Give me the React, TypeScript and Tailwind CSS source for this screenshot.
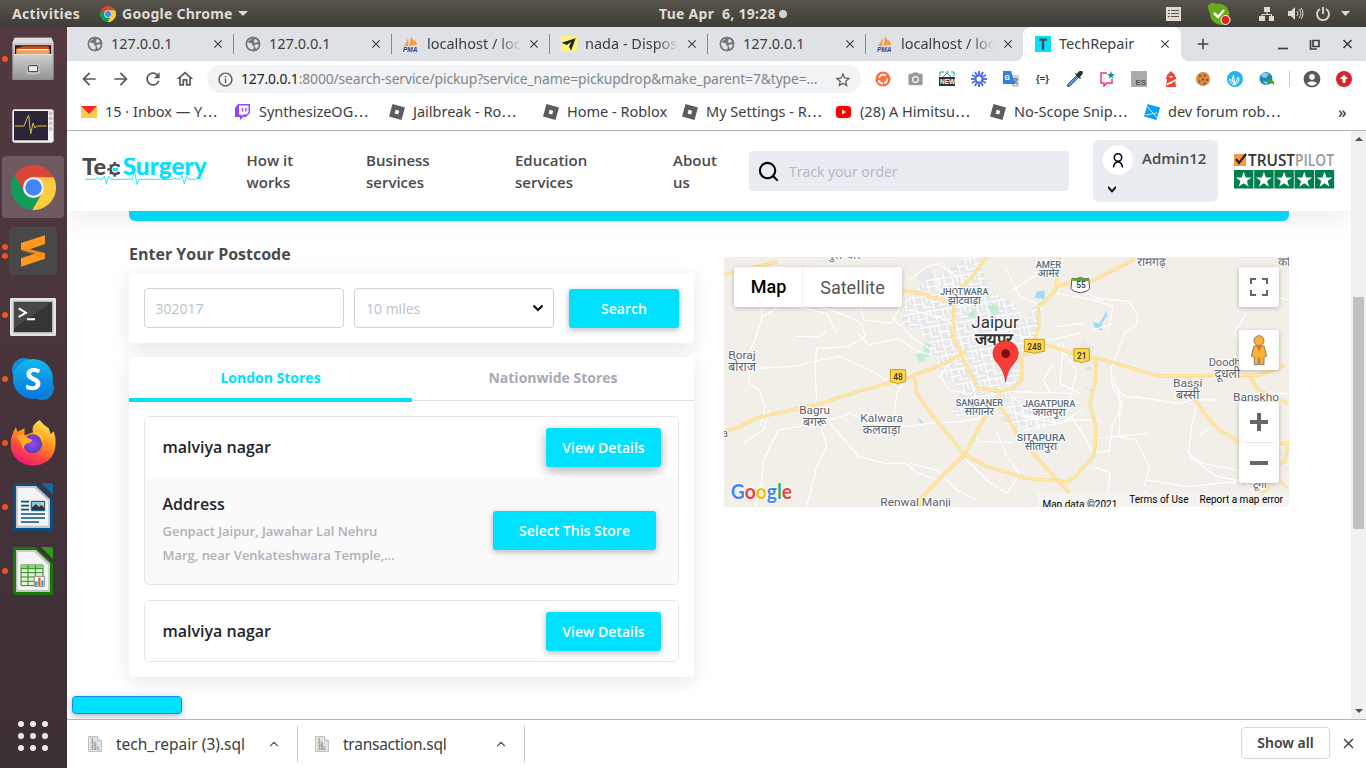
import React from "react";
import {
  MdArrowBack,
  MdArrowForward,
  MdRefresh,
  MdOutlineHome,
  MdInfoOutline,
  MdStarBorder,
  MdAccountCircle,
  MdCameraAlt,
  MdClose,
  MdAdd,
} from "react-icons/md";
import { Search, ChevronDown, ChevronUp } from "lucide-react";

type Kids = { children?: React.ReactNode };

function ChromeLogo({ size }: { size: number }) {
  const wedge = "M-18.45,-12 A22 22 0 0 1 19.6,-10 L0,-10 A10 10 0 0 0 -8.66,5 Z";
  return (
    <svg width={size} height={size} viewBox="-22 -22 44 44" className="shrink-0">
      <path d={wedge} fill="#db4437" />
      <path d={wedge} fill="#0f9d58" transform="rotate(-120)" />
      <path d={wedge} fill="#ffcd40" transform="rotate(120)" />
      <circle r="10.3" fill="#f1f1f1" />
      <circle r="8.1" fill="#4285f4" />
    </svg>
  );
}

/* ---------- System bar ---------- */

function SystemBar() {
  return (
    <div className="flex h-[27px] shrink-0 items-center bg-linear-to-b from-[#57544c] to-[#3f3d38] font-['Noto_Sans','Open_Sans',sans-serif] text-[14px] font-bold text-[#dfdbd2]">
      <div className="w-[100px] pl-3 tracking-[0.3px]">Activities</div>
      <ChromeLogo size={16} />
      <div className="ml-[6px] w-[116px] whitespace-nowrap tracking-[0.25px]">Google Chrome</div>
      <svg width="10" height="5" viewBox="0 0 10 5">
        <path d="M0 0h10L5 5z" fill="#dfdbd2" />
      </svg>
      <div className="ml-[411px] w-[118px] whitespace-pre text-[14px] tracking-[0.27px]">Tue Apr  6, 19:28</div>
      <div className="ml-[2px] size-2 rounded-full bg-[#d5d2ca]" />
      <svg width="15" height="14" viewBox="0 0 15 14" className="ml-[379px]">
        <path d="M0 0h15v14H0z" fill="#dfdbd2" />
        <path d="M2 3.5h2M5 3.5h8M2 6.5h2M5 6.5h8M2 9.5h2M5 9.5h8" stroke="#57544c" />
      </svg>
      <svg width="24" height="24" viewBox="0 0 24 24" className="ml-[26px]">
        <path d="M1 5C1 1 6 0 9 2c6-1 12 2 13 8 1 7-1 12-7 13-6 0-12-4-12-12C2 9 1 7 1 5z" fill="#67ab1c" />
        <path d="M7 11l4 4 6-7" stroke="#fff" strokeWidth="2.5" fill="none" />
        <circle cx="18.500" cy="18" r="4.500" fill="#e02020" stroke="#fff" />
      </svg>
      <svg width="92" height="16" viewBox="0 0 92 16" className="ml-[28px]">
        <g fill="#dfdbd2">
          <path d="M5 1h6v5H5zM0 10h6v5H0zM10 10h5v5h-5z" />
          <path d="M8 6v2.500M3 10V8.500h9.500V10" stroke="#dfdbd2" fill="none" />
          <path d="M29 5h3l4-4v13l-4-4h-3z" />
          <path d="M38 5q2 2.500 0 5M40 3q4 4.500 0 9M42 2q4 5.500 0 11" stroke="#dfdbd2" fill="none" />
          <path d="M61 3a6 6 0 1 0 6 0M64 1v7" stroke="#dfdbd2" strokeWidth="1.800" fill="none" />
          <path d="M82 5h9l-4.500 5z" />
        </g>
      </svg>
    </div>
  );
}

/* ---------- Dock ---------- */

function DockItem({ dots = 1, active = false, children }: Kids & { dots?: number; active?: boolean }) {
  return (
    <div className="flex h-16 items-center">
      <div className="flex w-[2px] shrink-0 flex-col items-start gap-[3px] pl-[2px]">
        {Array.from({ length: dots }).map((_, i) => (
          <div key={i} className="size-[6px] shrink-0 rounded-full bg-[#ea5420]" />
        ))}
      </div>
      <div className={active ? "flex h-[62px] w-[62px] items-center justify-center rounded-[4px] bg-[#705a61]" : "flex h-[62px] w-[62px] items-center justify-center"}>
        {children}
      </div>
    </div>
  );
}

function OfficeDoc({ dark, light, children }: Kids & { dark: string; light: string }) {
  return (
    <svg width="40" height="48" viewBox="0 0 120 144">
      <path d="M0 6q0-6 6-6h60l54 50v88q0 6-6 6H6q-6 0-6-6z" fill={dark} />
      <path d="M84 0h30q6 0 6 6v30z" fill={light} />
      <path d="M9 9h60l42 40v86H9z" fill="#c4c4c4" />
      <path d="M14 14h50l42 40v74H14z" fill="#f4f4f4" />
      {children}
    </svg>
  );
}

function Dock() {
  return (
    <div className="flex w-[67px] shrink-0 flex-col bg-linear-to-b from-[#533a40] via-[#47333a] to-[#3b3036]">
      <DockItem>
        <svg width="42" height="44" viewBox="0 0 126 132">
          <defs>
            <linearGradient id="cab" x1="0" y1="0" x2="0" y2="1">
              <stop offset="0" stopColor="#cfcfcf" />
              <stop offset="1" stopColor="#949494" />
            </linearGradient>
          </defs>
          <path d="M8 2h110l7 16v110H1V18z" fill="url(#cab)" />
          <path d="M8 2h110l7 16H1z" fill="#dcdcdc" />
          <path d="M9 25h108v27H9z" fill="#221a18" />
          <path d="M13 32q15 0 18-4h80v24H13z" fill="#cf4a18" />
          <path d="M13 36h100v16H13z" fill="#f3a15a" />
          <path d="M18 38h90" stroke="#fff" strokeWidth="3" />
          <path d="M5 52h116v76H5z" fill="url(#cab)" />
          <path d="M5 53h116" stroke="#e8e8e8" strokeWidth="3" />
          <rect x="42" y="78" width="42" height="34" rx="7" fill="#c6c6c6" stroke="#aaa" strokeWidth="2" />
          <rect x="49" y="86" width="28" height="18" rx="2" fill="#eee" stroke="#333" strokeWidth="3" />
        </svg>
      </DockItem>
      <DockItem dots={0}>
        <svg width="42" height="34" viewBox="0 0 126 102" className="mt-1.5">
          <rect x="1" y="1" width="124" height="100" rx="7" fill="#f4f2f0" />
          <rect x="6" y="6" width="102" height="88" fill="#2c2538" />
          <path d="M8 51h28l8-20 6-12 6 56 7-33 6 15 5-6h30" fill="none" stroke="#d6c03c" strokeWidth="3" />
          <g fill="#cfcac6" stroke="#918b88">
            <circle cx="116" cy="13" r="5" /><circle cx="116" cy="28" r="5" /><circle cx="116" cy="43" r="5" /><circle cx="116" cy="60" r="5" />
          </g>
        </svg>
      </DockItem>
      <DockItem active><ChromeLogo size={45} /></DockItem>
      <DockItem dots={2}>
        <div className="flex size-12 items-center justify-center rounded-[4px] bg-[#484848]">
          <svg width="26" height="32" viewBox="0 0 78 96">
            <path d="M3 24L75 1v26L29 43l46 12v16L3 95V70l45-15L3 44z" fill="#ff9820" />
            <path d="M3 42l26 1 46 12v16L3 46z" fill="#f08418" opacity=".5" />
          </svg>
        </div>
      </DockItem>
      <DockItem>
        <svg width="46" height="38" viewBox="0 0 138 114" className="mt-1">
          <rect width="138" height="114" rx="4" fill="#e6e4e2" />
          <rect x="8" y="8" width="122" height="98" fill="#b9b6b3" />
          <rect x="12" y="12" width="114" height="90" fill="#353535" />
          <path d="M12 12h114L12 90z" fill="#484848" />
          <path d="M26 31l22 13-22 13M51 64h24" fill="none" stroke="#fff" strokeWidth="6" />
        </svg>
      </DockItem>
      <DockItem>
        <svg width="42" height="42" viewBox="0 0 42 42">
          <defs>
            <linearGradient id="sky" x1="0" y1="0" x2="0" y2="1">
              <stop offset="0" stopColor="#0db9f2" />
              <stop offset="1" stopColor="#0b74d8" />
            </linearGradient>
          </defs>
          <circle cx="12" cy="12" r="12" fill="#0a91d9" />
          <circle cx="30" cy="30" r="12" fill="#0b83d6" />
          <circle cx="21" cy="21" r="20" fill="url(#sky)" />
          <text x="21" y="32" textAnchor="middle" fontFamily="Open Sans" fontWeight="700" fontSize="30" fill="#fff">S</text>
        </svg>
      </DockItem>
      <DockItem>
        <svg width="46" height="46" viewBox="0 0 138 140">
          <defs>
            <linearGradient id="fx" x1="0.8" y1="0" x2="0.3" y2="1">
              <stop offset="0" stopColor="#fff14a" />
              <stop offset=".4" stopColor="#ff9a1f" />
              <stop offset=".7" stopColor="#ff4a3d" />
              <stop offset="1" stopColor="#e8137c" />
            </linearGradient>
            <radialGradient id="fxp">
              <stop offset="0" stopColor="#a147f0" />
              <stop offset="1" stopColor="#5a3fc0" />
            </radialGradient>
          </defs>
          <path d="M89 0q12 16 28 25l6 18 9-9q8 22 5 44a68 62 0 0 1-136-2Q1 46 17 22l5 14 21-11v22l26-10q-7-20 20-37z" fill="url(#fx)" />
          <circle cx="68" cy="72" r="29" fill="url(#fxp)" />
          <path d="M18 48q22-8 31 2 4 7 18 10-3 10-16 11-9 4-11 19Q31 65 18 48z" fill="#ffab25" />
          <path d="M68 38q24 4 28 32 8-18-9-34z" fill="#ffc42c" />
        </svg>
      </DockItem>
      <DockItem>
        <OfficeDoc dark="#0a4f80" light="#0d68a3">
          <path d="M24 56h24M24 68h24M24 80h24M24 93h72M24 105h72M24 117h54" stroke="#0a4f80" strokeWidth="5" />
          <path d="M55 55h40v28H55z" fill="#8bc6ea" stroke="#0a4f80" strokeWidth="3" />
          <path d="M57 81V73l12-10 9 9 7-6 9 9v6z" fill="#333" />
          <circle cx="88" cy="62" r="4" fill="#f7d84d" />
        </OfficeDoc>
      </DockItem>
      <DockItem>
        <OfficeDoc dark="#177a08" light="#28a012">
          <path d="M24 54h66v62H24z" fill="#e0f2da" stroke="#2d8a1e" strokeWidth="3" />
          <path d="M24 54h66v10H24z" fill="#8fd07e" />
          <path d="M24 65h66M24 77h66M24 90h66M24 103h66M45 54v62M67 54v62" stroke="#2d8a1e" strokeWidth="3" />
          <path d="M64 88h30v30H64z" fill="#fff" stroke="#888" strokeWidth="3" />
          <path d="M70 116v-13" stroke="#3a8fd8" strokeWidth="7" />
          <path d="M79 116V92" stroke="#e0621c" strokeWidth="7" />
          <path d="M88 116v-16" stroke="#3a8fd8" strokeWidth="6" />
        </OfficeDoc>
      </DockItem>
      <div className="mt-auto mb-[17px] ml-[18px] grid w-[30px] grid-cols-3 gap-[6px]">
        {Array.from({ length: 9 }).map((_, i) => (
          <div key={i} className="size-[6px] rounded-full bg-[#ece9e6]" />
        ))}
      </div>
    </div>
  );
}

/* ---------- Browser chrome ---------- */

function PmaIcon() {
  return (
    <svg width="16" height="16" viewBox="0 0 16 16" className="shrink-0">
      <path d="M1 10Q4 6 5 2q1 4 0 8zM6 10Q8 5 8 0q3 5 3 9zM11 9q0-3-1-6 4 3 4 6z" fill="#f79a3a" />
      <text x="0" y="15.500" fontFamily="Liberation Sans" fontWeight="700" fontStyle="italic" fontSize="6.500" fill="#38407a">PMA</text>
    </svg>
  );
}
function NadaIcon() {
  return (
    <svg width="16" height="16" viewBox="0 0 48 48" className="shrink-0">
      <path d="M0 0h48v48H0z" fill="#fff47a" />
      <path d="M2 20L44 7 30 44 24 31l8-14-15 10z" fill="#222" />
    </svg>
  );
}
const Globe = () => (
  <svg width="16" height="16" viewBox="0 0 48 48" className="shrink-0">
    <circle cx="24" cy="24" r="22" fill="#757575" />
    <path d="M22 6q-3 5-7 5-1 4-6 5 0 6 6 5 5 0 7 4-1 6 4 6 3 6-4 11Q8 41 6 24 7 10 22 6z" fill="#dee1e6" />
    <path d="M28 8q8 2 11 8-5 6-9 4-6-3-3-6 4-2 1-6zM30 27q6-4 12 0-2 9-9 13-1-7-4-8-2-3 1-5z" fill="#dee1e6" />
    <circle cx="24" cy="24" r="20" fill="none" stroke="#757575" strokeWidth="4" />
  </svg>
);

function Tab({ icon, label, last }: { icon: React.ReactNode; label: string; last?: boolean }) {
  return (
    <div className="flex w-[158px] items-center">
      <div className="flex w-6 shrink-0">{icon}</div>
      <div className={label.length > 10 ? "w-[94px] overflow-hidden whitespace-nowrap mask-r-from-75%" : "w-[94px] whitespace-nowrap"}>{label}</div>
      <MdClose size={14} className="ml-[6px] text-[#3c4043]" />
      <div className={last ? "hidden" : "ml-[8px] h-5 w-px bg-[#878b91]"} />
    </div>
  );
}

function TabStrip() {
  return (
    <div className="flex h-[34px] shrink-0 bg-[#dee1e6] pl-5 text-[14.5px] text-[#3c4043]">
      <Tab icon={<Globe />} label="127.0.0.1" />
      <Tab icon={<Globe />} label="127.0.0.1" />
      <Tab icon={<PmaIcon />} label="localhost / loc" />
      <Tab icon={<NadaIcon />} label="nada - Disposa" />
      <Tab icon={<Globe />} label="127.0.0.1" />
      <Tab icon={<PmaIcon />} label="localhost / loc" last />
      <div className="relative -ml-[12px] flex w-[158px] items-center rounded-t-lg bg-white pl-3">
        <div className="absolute bottom-0 -left-2 size-2 bg-[radial-gradient(circle_at_0_0,#dee1e6_8px,white_8px)]" />
        <div className="absolute -right-2 bottom-0 size-2 bg-[radial-gradient(circle_at_100%_0,#dee1e6_8px,white_8px)]" />
        <svg width="16" height="16" viewBox="0 0 16 16">
          <path d="M0 0h16v16H0z" fill="#00e0ff" />
          <path d="M4 2.500h8v2.200H9.200V14H6.800V4.700H4z" fill="#4a4a4a" />
        </svg>
        <div className="ml-2 w-[99px]">TechRepair</div>
        <MdClose size={14} />
      </div>
      <div className="flex flex-1 items-center pl-[13px]">
        <MdAdd size={18} />
        <svg width="76" height="14" viewBox="0 0 76 14" className="ml-[65px]" fill="none" stroke="#3c4043" strokeWidth="1.700">
          <path d="M1 11.500h10" />
          <path d="M36 3.500h6v6h-6zM33.500 3v9H40" />
          <path d="M66.500 3l8 8M74.500 3l-8 8" />
        </svg>
      </div>
    </div>
  );
}

const extensionIcons: React.ReactNode[] = [
  <>
    <circle cx="8" cy="8" r="7.500" fill="#ff6c37" />
    <path d="M4 7a4.200 4.200 0 0 1 6-3M12 7.500a4.200 4.200 0 0 1-2 4.500M8 12.500a4.200 4.200 0 0 1-4-3" fill="none" stroke="#fff" strokeWidth="1.800" />
    <path d="M9 2.500l2.500 1.500-2 2zM11.500 12.500h-3l1.500-2.500zM3 12V9l2.500 1z" fill="#fff" />
  </>,
  null,
  <>
    <path d="M1 5V1h4M7 1h3M12 1h3v4" stroke="#1a9caa" fill="none" />
    <path d="M4 6l4-4 4 4" stroke="#1a9caa" fill="none" />
    <path d="M0 6h16v9H0z" fill="#333" />
    <text x="1" y="13" fontFamily="Liberation Sans" fontWeight="700" fontSize="6.500" fill="#fff">NEW</text>
  </>,
  <g stroke="#4f6bed" strokeWidth="1.900">
    {[0, 30, 60, 90, 120, 150, 180, 210, 240, 270, 300, 330].map((a) => (
      <path key={a} d="M8 0v5" transform={`rotate(${a} 8 8)`} />
    ))}
    <circle cx="8" cy="8" r="3.500" fill="none" />
  </g>,
  <>
    <path d="M6 4h10v12H9z" fill="#cfd3d8" />
    <path d="M0 0h8l4 13H0z" fill="#2f7de9" />
    <text x="1.500" y="9" fontFamily="Roboto" fontWeight="700" fontSize="8" fill="#fff">G</text>
    <path d="M10 8h5M12.500 7v1M14 8q-1 4-4 5M11 9q1 3 4 4" stroke="#49708a" fill="none" />
  </>,
  <text x="1" y="11" fontFamily="Liberation Sans" fontWeight="700" fontSize="9.500" fill="#333">{"{=}"}</text>,
  <>
    <path d="M9.500 4.500l2 2L3 15l-3 1 1-3z" fill="#5d8fd0" stroke="#3d4450" strokeWidth=".8" />
    <path d="M8 3l5 5 1-1-1-1 2.500-3q1-2-.5-3t-3 .5L9.500 3 9 2z" fill="#2c2f36" />
  </>,
  <>
    <path d="M8 2H2v10h3v3l3-3h5V8" fill="none" stroke="#ef3e66" strokeWidth="1.500" />
    <path d="M12 0l1 3h3l-2.500 2 1 3L12 6 9.500 8l1-3L8 3h3z" fill="#16919b" />
  </>,
  <>
    <path d="M0 0h16v16H0z" fill="#aaa" />
    <text x="4.500" y="14" fontFamily="Liberation Sans" fontWeight="700" fontSize="8" fill="#555">ES</text>
  </>,
  <>
    <path d="M4 4l4-4 4 4v2h1v2h-1l1 8H3l1-8H3V6h1z" fill="#f4452c" />
    <path d="M6.500 6.500V5h3v1.500zM4 12.500l8-4v2l-8 4z" fill="#fff" />
  </>,
  <>
    <circle cx="8" cy="8" r="7" fill="#d58b45" />
    <g fill="#7a431a"><circle cx="5" cy="5" r="1" /><circle cx="10" cy="4.500" r="1" /><circle cx="8" cy="8.500" r="1" /><circle cx="12" cy="9" r="1" /><circle cx="4.500" cy="10.500" r="1" /><circle cx="9.500" cy="12.500" r="1" /></g>
  </>,
  <>
    <circle cx="8" cy="8" r="8" fill="#23b4f0" />
    <path d="M8 14L6.500 4Q4 9 8 14zM8 14l3-8Q14 10 8 14zM8 14Q3 13 2.500 8q4 1 5.500 6z" fill="#23b4f0" stroke="#fff" />
  </>,
  <>
    <circle cx="7" cy="7.500" r="6.500" fill="#2186b8" />
    <path d="M2 3q4-3 8 0l-3 4-4-1zM4 10l5 1-2 3z" fill="#7fd0ea" />
    <path d="M9 9l3-2v2q4 1 3 5l-2-2-1 1-3-2z" fill="#3d9d2c" />
  </>,
];

function Toolbar() {
  return (
    <div className="flex h-[36px] shrink-0 items-center bg-white text-[#54585d]">
      <div className="flex w-[140px] gap-3 pl-3">
        <MdArrowBack size={20} /><MdArrowForward size={20} /><MdRefresh size={20} /><MdOutlineHome size={20} />
      </div>
      <div className="flex h-7 w-[654px] items-center rounded-full bg-[#f1f3f4]">
        <MdInfoOutline size={17} className="ml-[10px]" />
        <div className="ml-[7px] w-[593px] text-[13.9px] whitespace-nowrap tracking-[-0.13px] text-[#80868b]">
          <span className="text-[#202124]">127.0.0.1</span>:8000/search-service/pickup?service_name=pickupdrop&amp;make_parent=7&amp;type=…
        </div>
        <MdStarBorder size={18} className="mt-px" />
      </div>
      <div className="ml-[6px] flex">
        {extensionIcons.map((icon, i) => (
          <div key={i} className="flex w-8 justify-center">
            {i === 1 ? <MdCameraAlt size={17} className="text-[#999]" /> : <svg width="16" height="16" viewBox="0 0 16 16">{icon}</svg>}
          </div>
        ))}
      </div>
      <div className="ml-[6px] h-4 w-px bg-[#c9ccd0]" />
      <MdAccountCircle size={20} className="ml-[12px]" />
      <svg width="16" height="16" viewBox="0 0 16 16" className="ml-[14px]">
        <circle cx="8" cy="8" r="8" fill="#e02020" />
        <path d="M8 3.500l4 4.500H9.500v4h-3V8H4z" fill="#fff" />
      </svg>
    </div>
  );
}

const RobloxIcon = ({ blue }: { blue?: boolean }) => (
  <svg width="16" height="16" viewBox="0 0 16 16">
    <path d="M3.500 0L16 3.500 12.500 16 0 12.500z" fill={blue ? "#00a2ff" : "#5a5d61"} />
    {blue ? <path d="M2.500 2l11 12M1.500 11L13 9" stroke="#fff" strokeWidth=".8" /> : <path d="M6.600 5.800l3.600 1-1 3.600-3.600-1z" fill="#fff" />}
  </svg>
);

const bookmarks = [
  { label: "15 · Inbox — Y", more: true, icon: <svg width="16" height="12" viewBox="0 0 16 12"><path d="M0 0h16v12H0z" fill="#ffcc4d" /><path d="M0 0h16L8 8z" fill="#f5282d" /></svg>, w: "w-[154px]" },
  { label: "SynthesizeOG", more: true, icon: <svg width="15" height="16" viewBox="0 0 15 16"><path d="M3 0h12v9l-4 4H8l-3 3v-3H0V4z" fill="#9147ff" /><path d="M4 1.500h9.500v7l-2 2H8.500L6.500 12v-1.500H4z" fill="#fff" /><path d="M7.500 4v3.500M11 4v3.500" stroke="#9147ff" strokeWidth="1.400" /></svg>, w: "w-[154px]" },
  { label: "Jailbreak - Ro", more: true, icon: <RobloxIcon />, w: "w-[154px]" },
  { label: "Home - Roblox", more: false, icon: <RobloxIcon />, w: "w-[139px]" },
  { label: "My Settings - R", more: true, icon: <RobloxIcon />, w: "w-[154px]" },
  { label: "(28) A Himitsu", more: true, icon: <svg width="15" height="12" viewBox="0 0 15 12"><rect width="15" height="12" rx="3" fill="#f00" /><path d="M6 3.500v5l4-2.500z" fill="#fff" /></svg>, w: "w-[154px]" },
  { label: "No-Scope Snip", more: true, icon: <RobloxIcon />, w: "w-[154px]" },
  { label: "dev forum rob", more: true, icon: <RobloxIcon blue />, w: "w-[194px]" },
];

function Bookmarks() {
  return (
    <div className="flex h-[34px] shrink-0 items-center border-b border-[#b2b4b6] bg-white pb-[3px] pl-[14px] text-[14.5px] text-[#3c4043]">
      {bookmarks.map((b) => (
        <div key={b.label} className={`flex shrink-0 items-center ${b.w}`}>
          <div className="flex w-6 shrink-0">{b.icon}</div>
          <div className="whitespace-nowrap">
            {b.label}
            {b.more && <span className="font-['DejaVu_Sans'] text-[15.5px] leading-none">…</span>}
          </div>
        </div>
      ))}
      <div className="text-[16px] font-medium">»</div>
    </div>
  );
}

/* ---------- Page ---------- */

function Logo() {
  return (
    <svg width="126" height="28" viewBox="0 0 378 84" className="mt-px shrink-0">
      <g fontFamily="Lato, sans-serif" fontWeight="900">
        <text x="0" y="52" fontSize="68" fill="#4a4a4d" textLength="72" lengthAdjust="spacingAndGlyphs">Te</text>
        <text x="122" y="52" fontSize="72" fill="#00e0ff" textLength="252" lengthAdjust="spacingAndGlyphs">Surgery</text>
      </g>
      <path d="M111 26A14 14 0 1 0 111 42" fill="none" stroke="#4a4a4d" strokeWidth="7" />
      <path d="M98 12v6M98 50v6M76 34h7M84 20l4 5M84 48l4-5M112 20l-4 5M112 48l-4-5" stroke="#4a4a4d" strokeWidth="7" />
      <path d="M92 34h16" stroke="#00e0ff" strokeWidth="9" />
      <path d="M10 64h28l8-4 8 4h8l5-9 6 22 7-22 6 9h53l6-3 5 6 7-31 8 43 6-15h101l7-4 9 4h6l6-12 7 26 7-22 6 8h20l8-5 8 8" fill="none" stroke="#00e0ff" strokeWidth="2.500" />
    </svg>
  );
}

function Trustpilot() {
  const star = "M0-8l2 5.700h5.900l-4.700 3.500 1.800 5.700L0 3.400l-5 3.500 1.800-5.700L-7.900-2.300H-2z";
  return (
    <svg width="102" height="38" viewBox="0 0 102 38" className="shrink-0">
      <path d="M1 2h12v12H1z" fill="#f79a3e" />
      <path d="M3 7l3 4 7-9" fill="none" stroke="#222" strokeWidth="2.200" />
      <text x="15" y="14" fontFamily="Open Sans" fontSize="17" fontWeight="600" fill="#333" textLength="47" lengthAdjust="spacingAndGlyphs">TRUST</text>
      <text x="62" y="14" fontFamily="Open Sans" fontSize="17" fill="#999" textLength="39" lengthAdjust="spacingAndGlyphs">PILOT</text>
      {[0, 1, 2, 3, 4].map((i) => (
        <g key={i} transform={`translate(${i * 20.2 + 1} 18)`}>
          <path d="M0 0h19.400v18.500H0z" fill="#007f4e" />
          <path d={star} transform="translate(9.700 9.800)" fill="#fff" />
        </g>
      ))}
    </svg>
  );
}

function SiteHeader() {
  return (
    <div className="relative z-10 flex h-20 shrink-0 items-center bg-white pl-[15px] text-[15px] leading-[22px] font-semibold text-[#4a4a4d] shadow-[0_8px_24px_rgba(0,0,0,0.07)]">
      <Logo />
      <div className="ml-[38.500px] w-[119.500px]">How it<br />works</div>
      <div className="w-[149px]">Business<br />services</div>
      <div className="w-[158px]">Education<br />services</div>
      <div className="w-[76px]">About<br />us</div>
      <div className="flex h-10 w-[320px] items-center rounded-[4px] bg-[#e9ecf1] pl-2 font-normal text-[#b2b8c4]">
        <Search size={23} strokeWidth={2.2} className="text-black" />
        <span className="mt-px ml-[9px] text-[14px]">Track your order</span>
      </div>
      <div className="ml-6 flex h-[62px] w-[125px] flex-col rounded-[6px] bg-[#e9ecf1] pt-[5px] pl-[10px]">
        <div className="flex h-[30px] items-center">
          <div className="flex size-[30px] items-center justify-center rounded-full bg-white">
            <svg width="12" height="15" viewBox="0 0 12 15" fill="none" stroke="#000" strokeWidth="1.500">
              <circle cx="6" cy="4.500" r="3.700" />
              <path d="M1.500 14.500q.5-5.500 4.500-5.500t4.500 5.500" />
            </svg>
          </div>
          <span className="ml-[9px] -mt-1">Admin12</span>
        </div>
        <svg width="8" height="7" viewBox="0 0 8 7" className="mt-[11px] ml-[5px]" fill="none" stroke="#000" strokeWidth="1.800"><path d="M0 .8l4 4.500L8 .8" /></svg>
      </div>
      <div className="ml-[15px]"><Trustpilot /></div>
    </div>
  );
}

function CyanButton({ children, size }: Kids & { size: string }) {
  return (
    <button className={`flex h-[39px] items-center justify-center rounded-[3px] bg-[#00e0ff] text-[14px] font-semibold text-white ${size}`}>
      {children}
    </button>
  );
}

function StoreRow({ raised }: { raised?: boolean }) {
  return (
    <div className="flex h-[60px] items-center justify-between overflow-hidden bg-white pr-[17px] pl-[17.500px]">
      <span className="text-[16px] font-semibold text-[#212529]">malviya nagar</span>
      <CyanButton size={raised ? "w-[115px] shadow-[0_4px_12px_rgba(0,0,0,0.32)]" : "w-[115px] shadow-[0_2px_6px_rgba(0,0,0,0.28)]"}>View Details</CyanButton>
    </div>
  );
}

function Stores() {
  return (
    <div className="w-[565px]">
      <h2 className="mb-[6px] text-[16px] leading-[26px] font-bold text-[#4a4a4d]">Enter Your Postcode</h2>
      <div className="flex h-[70px] items-center rounded-[4px] bg-white px-[15px] text-[14px] text-[#b8bfc8] shadow-[0_4px_20px_rgba(0,0,0,0.1)]">
        <div className="mr-[10px] flex h-10 w-[200px] items-center rounded-[4px] border border-[#ced4da] px-[10.500px]">302017</div>
        <div className="mr-[15px] flex h-10 w-[200px] items-center justify-between rounded-[4px] border border-[#ced4da] pr-[9px] pl-[11px]">
          10 miles
          <svg width="12" height="8" viewBox="0 0 12 8" fill="none" stroke="#000" strokeWidth="2"><path d="M1.500 1.500L6 6l4.500-4.500" /></svg>
        </div>
        <CyanButton size="w-[110px] shadow-[0_2px_6px_rgba(0,0,0,0.28)]">Search</CyanButton>
      </div>
      <div className="mt-[14px] h-[320px] rounded-[4px] bg-white shadow-[0_4px_20px_rgba(0,0,0,0.1)]">
        <div className="flex h-[45px] text-center text-[14px] leading-[42px] font-bold text-[#a9a9b3]">
          <div className="h-[45px] w-[283px] border-b-4 border-[#00e0ff] text-[#00e0ff]">London Stores</div>
          <div className="h-[44px] flex-1 border-b border-[#dee2e6]">Nationwide Stores</div>
        </div>
        <div className="flex flex-col gap-[15px] px-[15px] pt-[14px]">
          <div className="h-[169px] overflow-hidden rounded-[5px] border border-[#e4e6ea] bg-[#fafafa]">
            <StoreRow raised />
            <div className="flex justify-between pr-[22px] pl-[17.500px]">
              <div className="w-[250px] pt-[14px]">
                <div className="text-[16px] leading-[26px] font-semibold text-[#212529]">Address</div>
                <div className="mt-[2px] text-[13px] leading-[24px] font-semibold tracking-[-0.02px] whitespace-nowrap text-[#b0b0b8]">
                  Genpact Jaipur, Jawahar Lal Nehru<br />Marg, near Venkateshwara Temple,…
                </div>
              </div>
              <div className="mt-[34px]"><CyanButton size="w-[163px] shadow-[0_2px_6px_rgba(0,0,0,0.28)]">Select This Store</CyanButton></div>
            </div>
          </div>
          <div className="h-[62px] overflow-hidden rounded-[5px] border border-[#e4e6ea]"><StoreRow /></div>
        </div>
      </div>
    </div>
  );
}

function Road({ d }: { d: string }) {
  return (
    <g fill="none" strokeLinejoin="round">
      <path d={d} stroke="#f9d88c" strokeWidth="10" />
      <path d={d} stroke="#ffe8a5" strokeWidth="6" />
    </g>
  );
}

function Place({ x, y, en, hi, w, cap }: { x: number; y: number; en: string; hi: string; w: number; cap?: boolean }) {
  return (
    <g textAnchor="middle" fontFamily="Roboto, 'Noto Sans', sans-serif" fill={cap ? "#546a79" : "#5a6068"} stroke="#fff" strokeWidth="6" paintOrder="stroke" strokeLinejoin="round" fontWeight={cap ? 500 : 400}>
      <text x={x} y={y} fontSize={cap ? 26 : 34} textLength={w} lengthAdjust="spacingAndGlyphs">{en}</text>
      <text x={x} y={y + (cap ? 28 : 36)} fontSize={cap ? 31 : 37}>{hi}</text>
    </g>
  );
}

function Shield({ x, y, w, n }: { x: number; y: number; w: number; n: string }) {
  return (
    <g>
      <path d={`M${x - w / 2} ${y - 22}h${w}v36q-${w / 2} 4-${w / 2} 8q0-4-${w / 2}-8z`} fill="#ffd54a" stroke="#c99a1c" strokeWidth="3" strokeLinejoin="round" />
      <text x={x} y={y + 9} textAnchor="middle" fontFamily="Roboto" fontWeight="500" fontSize="25" fill="#333">{n}</text>
    </g>
  );
}

const CITY =
  "M745 21h35l15 60 30 50 60 30 30 50 30-50 25 10-15 80-30 50-30 20v70l-15 40 30 30 60 15 70-10-30 60-60 10-80 0-60-70-40-10-50 50-30-20 40-70-60-30-20-50-25-60-30-40-50-10 10-60 40-60z";

function MapArt() {
  return (
    <svg width="565" height="250" viewBox="12 21 1695 750" className="block">
      <defs>
        <pattern id="streets" width="52" height="46" patternUnits="userSpaceOnUse" patternTransform="rotate(-9) skewX(6)">
          <path d="M0 4h52M0 24h30M24 36h28M6 0v46M30 4v32M44 0v24" fill="none" stroke="#fff" strokeWidth="3.500" />
        </pattern>
      </defs>
      <path d="M0 0h1720v780H0z" fill="#f2efe9" />
      <path d="M225 255h28v12h-28zM585 75l40-20 40 20-10 40-40-10zM1090 270l35 20-20 40-25-30z" fill="#e9e8ea" />
      <path d={CITY} fill="#e8e8ea" />
      <path d={CITY} fill="url(#streets)" />
      <path d="M745 190l25-15-5 30-22-2zM800 170l25-10 15 30-20 5zM612 275l20 10-5 35-18 5zM585 315l20-10 10 25-15 8zM1095 358l15-10 6 12z" fill="#c4ecd0" />
      <g fill="#a0dcfa">
        <path d="M591 500l20 18-6 6zM949 125l25-4v25l-28-2zM1118 215l20 5 22-38 2 16-15 20-3 25-20-10zM1085 405l25 14 20 0-18 4z" />
      </g>
      <g fill="none" stroke="#fff" strokeWidth="3.500" strokeLinejoin="round">
        <path d="M125 170v40l-20 60-20 40 3 90 30 20 18 50-15 60M85 358l160-12M350 250l-30-60-90-20M130 200l90-60 80-10M225 260h75l20-20M300 170l60 20 65 30 10 40-50 30-95 5-5 60 5 90-20 60 15 30M420 170l10 40M435 210l80 10 30-60 40-20M240 345l60-15 60-10 90 40 50 30M415 250l30 35 90-20 60 40 40 10M515 200l60 60 60 40M330 510l60-20 50 30 120 10 60-10 100-5 60-10M520 520l10-90 40-60M325 515l40 45 50 60 80 20 60 0 40 30 60 20M300 520l20 70-30 60-30 120M295 520l-120 20-45 90-5 60-20 80M150 480l-20 60-60 40" />
        <path d="M570 90l50-40 40-10 30 30 60 20M570 180l80 20 50 20M640 60l20 60 30 30M700 320l-40 60 30 40 50 10M775 575l-10-30M775 575l105 3M830 545l30 70 40 60-40 55M860 730l-60-40-60-60M570 640l80 20 60 60 60 30M840 480l90 20 60-10M905 500l120 20 60-40M910 540l150-30M940 460l20 80M985 450l20 80M880 425l180 5M880 440l40 40" />
        <path d="M900 260l60 0M1010 230l80-10M990 270l90-20M1000 340l-30 50 20 40M1010 280l60 80-20 90M1030 280l-10 120 60 30M880 120l90-60M860 60l40 80 50 20" />
        <path d="M1010 130l110 20 60 20-15 70M1070 115l60 30 100 10 22 40-2 30-35 22-32 86-10 20 5 60 30 50-30 60-10 80-50 5-20-40-40-60 90 5M1120 240l60-20M1175 400l40 40 60 5M1245 440l130 20 60-15M1430 460l-15 70-10 80 40 30 110 20 50 80M1410 620l80 60 90 15M1180 380l20 60-2 120 50 10 40 80-15 60M1130 565l150-15M1120 650l50 20-10 100M1280 690l120 20 150-15M1270 720l30 50M1430 450l70 0M1580 190l-40 60 50 40M1620 130l85 20M1640 430l60 0M1440 555l30-20" />
      </g>
      <Road d="M12 75l60-15 100-25" />
      <Road d="M12 545l40-12 60-30 80-18 105-22 120-40 130-34 80-30 50-20 61-34" />
      <Road d="M545 122l55 7 60 20 40 5" />
      <Road d="M800 21l-48 64-49 45-5 130 17 30 20 50 40 75 60 8 45-8 25-25v-50l-5-15 43-30" />
      <Road d="M945 270l12-45-2-55 45-40 10-20 45-13 55-2 60-30 75-38" />
      <Road d="M1018 21l-8 79-10 30" />
      <Road d="M583 370l7 60 50 70 95 115 65 35 120 35 120 10 20-10 60-65 5-30 3-60-18-70 17-75v-55" />
      <Road d="M960 288l30 0 80 25 75 15 85 25 85 25 160-2 70 0 70 0 80-30" />
      <Road d="M1405 378l10 55 40 60 45 50 40 20 100 90 60 60M1590 380l25 40 90 40M1680 580l25 0-10 55-60 20M1590 760l60-50" />
      <Road d="M838 423v50l-30 5-38 67-35 67-80 78-55 60-5 30" />
      <Road d="M838 465l27 40 30 55 45 50 75 85 30 30 5 50" />
      <g fill="#5f656c" fontFamily="Roboto, sans-serif" fontSize="36" stroke="#fff" strokeWidth="6" paintOrder="stroke">
        <text x="322" y="28">नुसम्बार</text>
        <text x="1252" y="49">रामगढ़</text>
        <text x="1674" y="49">को</text>
        <text x="142" y="65" fontSize="25">ooo</text>
        <text x="7" y="560" fontSize="31">a</text>
        <text x="1600" y="714" fontSize="32">टूंगा</text>
      </g>
      <Place x={66} y={327} en="Boraj" hi="बोराज" w={82} />
      <Place x={284} y={491} en="Bagru" hi="बगरू" w={92} />
      <Place x={485} y={516} en="Kalwara" hi="कलवाड़ा" w={128} />
      <Place x={587} y={767} en="Renwal Manji" hi="" w={212} />
      <Place x={733} y={134} en="JHOTWARA" hi="झोटवाड़ा" w={144} cap />
      <Place x={778} y={468} en="SANGANER" hi="सांगानेर" w={142} cap />
      <Place x={985} y={54} en="AMER" hi="आमेर" w={76} cap />
      <Place x={987} y={471} en="JAGATPURA" hi="जगतपुरा" w={158} cap />
      <Place x={963} y={573} en="SITAPURA" hi="सीतापुरा" w={146} cap />
      <Place x={1403} y={411} en="Bassi" hi="बस्सी" w={88} />
      <Place x={1522} y={348} en="Doodhli" hi="दूधली" w={112} />
      <Place x={1608} y={453} en="Banskho" hi="" w={138} />
      <g textAnchor="middle" fill="#333" stroke="#fff" strokeWidth="6" paintOrder="stroke" fontFamily="Roboto, sans-serif">
        <text x="825" y="235" fontSize="48" fontWeight="400" textLength="142" lengthAdjust="spacingAndGlyphs">Jaipur</text>
        <text x="823" y="284" fontSize="50" fontWeight="600">जयपुर</text>
      </g>
      <Shield x={534} y={381} w={46} n="48" />
      <Shield x={943} y={290} w={60} n="248" />
      <Shield x={1085} y={318} w={46} n="21" />
      <path d="M1056 85q12 4 25-3 13 7 25 3l3 30q-4 10-28 13-24-3-28-13z" fill="#fff" stroke="#555" strokeWidth="3" />
      <path d="M1057 84q12 4 24-3 12 7 24 3v9h-48z" fill="#6a9d4a" />
      <text x="1083" y="114" textAnchor="middle" fontFamily="Roboto" fontWeight="500" fontSize="25" fill="#333">55</text>
      <path d="M857 396q-4-34-24-55-14-14-14-31a38 38 0 0 1 76 0q0 17-14 31-20 21-24 55z" fill="#f93b36" stroke="#c9302c" strokeWidth="2" />
      <circle cx="857" cy="311" r="13" fill="#75100c" />
      <text x="32" y="748" fontFamily="Lato, sans-serif" fontWeight="700" fontSize="60" stroke="#fff" strokeWidth="5" paintOrder="stroke" textLength="184" lengthAdjust="spacingAndGlyphs">
        <tspan fill="#4285f4">G</tspan><tspan fill="#ea4335">o</tspan><tspan fill="#fbbc05">o</tspan><tspan fill="#4285f4">g</tspan><tspan fill="#34a853">l</tspan><tspan fill="#ea4335">e</tspan>
      </text>
    </svg>
  );
}

function MapPanel() {
  return (
    <div className="relative mt-[16px] h-[250px] w-[565px] overflow-hidden font-['Roboto',sans-serif]">
      <MapArt />
      <div className="absolute top-[10px] left-[10px] flex h-10 items-center rounded-[2px] bg-white text-[18px] shadow-[0_1px_4px_rgba(0,0,0,0.25)]">
        <div className="w-[69px] border-r border-[#eee] pl-px text-center leading-10 font-medium text-black">Map</div>
        <div className="w-[99px] text-center text-[#565656]">Satellite</div>
      </div>
      <div className="absolute top-[10px] right-[10px] flex size-10 items-center justify-center rounded-[2px] bg-white shadow-[0_1px_4px_rgba(0,0,0,0.25)]">
        <svg width="18" height="18" viewBox="0 0 18 18" fill="none" stroke="#666" strokeWidth="2"><path d="M1 6V1h5M12 1h5v5M17 12v5h-5M6 17H1v-5" /></svg>
      </div>
      <div className="absolute top-[73px] right-[10px] flex size-10 items-center justify-center rounded-[2px] bg-white shadow-[0_1px_4px_rgba(0,0,0,0.25)]">
        <svg width="18" height="32" viewBox="0 0 54 96" fill="#fbb03b" stroke="#8a7a60" strokeWidth="3">
          <path d="M12 36h30l8 30-8 4v22H29V72h-4v20H13V70l-9-4z" />
          <circle cx="27" cy="20" r="15" />
          <path d="M19 37h17l-9 15z" fill="#e0701c" stroke="none" />
        </svg>
      </div>
      <div className="absolute top-[145px] right-[10px] flex h-[81px] w-10 flex-col items-center rounded-[2px] bg-white shadow-[0_1px_4px_rgba(0,0,0,0.25)]">
        <svg width="30" height="81" viewBox="0 0 30 81" stroke="#666" strokeWidth="4"><path d="M6 20h18M15 11v18M6 61h18" /><path d="M0 40.500h30" stroke="#e6e6e6" strokeWidth="1" /></svg>
      </div>
      <div className="absolute right-0 bottom-0 flex h-[14px] items-start gap-px text-[10px] leading-[14px] whitespace-nowrap text-black">
        <div className="bg-[#f5f5f5]/85 px-[5px] pt-[5px]">Map data ©2021</div>
        <div className="bg-[#f5f5f5]/85 pr-[5px] pl-[6px]">Terms of Use</div>
        <div className="bg-[#f5f5f5]/85 pr-[6px] pl-[5px]">Report a map error</div>
      </div>
    </div>
  );
}

function Scrollbar() {
  return (
    <div className="flex w-[15px] shrink-0 flex-col items-center bg-[#f1f1f1]">
      <svg width="8" height="4" viewBox="0 0 8 4" className="mt-[6px]"><path d="M0 4h8L4 0z" fill="#505050" /></svg>
      <div className="mt-[156px] h-[232px] w-[11px] bg-[#c1c1c1]" />
      <svg width="8" height="4" viewBox="0 0 8 4" className="mt-auto mb-[6px]"><path d="M0 0h8L4 4z" fill="#505050" /></svg>
    </div>
  );
}

function Page() {
  return (
    <div className="flex h-[588px] shrink-0 bg-white font-['Open_Sans',sans-serif]">
      <div className="flex w-[1284px] flex-col overflow-hidden">
        <SiteHeader />
        <div className="ml-[62px] h-[10px] w-[1160px] shrink-0 rounded-b-[6px] bg-[#00e0ff]" />
        <div className="mt-5 ml-[62px] flex gap-[30px]">
          <Stores />
          <MapPanel />
        </div>
        <div className="mt-[19px] ml-[5px] h-[18px] w-[110px] shrink-0 rounded-[4px] border border-[#0b8cf5] bg-[#00e0ff] shadow-[0_2px_6px_rgba(0,0,0,0.3)]" />
      </div>
      <Scrollbar />
    </div>
  );
}

function Download({ name, w }: { name: string; w: string }) {
  return (
    <div className={`flex h-9 items-center border-r border-[#c8c8c8] ${w}`}>
      <svg width="14" height="16" viewBox="0 0 14 16">
        <path d="M.5.500h9l4 4v11H.500z" fill="#e3e3e3" stroke="#c2c2c2" />
        <path d="M9.500.500v4h4" fill="#f5f5f5" stroke="#bbb" />
        <g fontFamily="Liberation Mono" fontWeight="700" fontSize="4.500" fill="#888"><text x="3" y="6">1</text><text x="3" y="10">10</text><text x="3" y="14">101</text></g>
      </svg>
      <div className="mt-[2px] ml-[14px] w-[151px] text-[15.500px] whitespace-nowrap">{name}</div>
      <ChevronUp size={14} strokeWidth={2.2} className="text-[#5f6368]" />
    </div>
  );
}

function Downloads() {
  return (
    <div className="flex flex-1 items-center border-t border-[#b2b4b6] bg-white text-[#3c4043]">
      <Download name="tech_repair (3).sql" w="w-[231px] pl-[21px]" />
      <Download name="transaction.sql" w="w-[227px] pl-[17px] tracking-[-0.25px]" />
      <div className="mb-[2px] ml-auto flex h-8 w-[89px] items-center justify-center rounded-[4px] border border-[#d5d8dc] pb-px text-[14px] font-semibold">Show all</div>
      <MdClose size={17} className="mr-[9px] mb-[2px] ml-[10px]" />
    </div>
  );
}

export default function App() {
  return (
    <div className="flex h-[768px] w-[1366px] flex-col overflow-hidden">
      <SystemBar />
      <div className="flex min-h-0 flex-1">
        <Dock />
        <div className="flex w-[1299px] flex-col font-['Noto_Sans','Open_Sans',sans-serif]">
          <TabStrip />
          <Toolbar />
          <Bookmarks />
          <Page />
          <Downloads />
        </div>
      </div>
    </div>
  );
}
